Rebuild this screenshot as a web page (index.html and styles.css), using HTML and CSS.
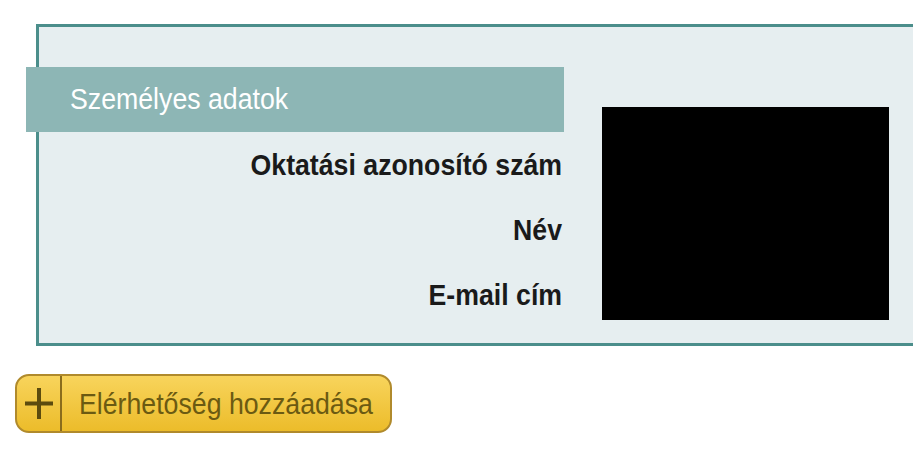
FILE: index.html
```html
<!DOCTYPE html>
<html>
<head>
    <title>Személyes adatok</title>
    <link rel="stylesheet" href="styles.css">
</head>
<body>
    <div class="page">
        <div class="panel">
            <div class="labels">
                <div class="section-title"><span class="narrow">Személyes adatok</span></div>
                <div class="field-label"><span class="narrow">Oktatási azonosító szám</span></div>
                <div class="field-label"><span class="narrow">Név</span></div>
                <div class="field-label"><span class="narrow">E-mail cím</span></div>
            </div>
            <div class="values"></div>
        </div>

        <button class="add-btn">
            <span class="add-icon">
                <svg width="28" height="31" viewBox="0 0 28 31">
                    <path d="M14 0 V31 M0 15.5 H28" stroke="#5c4b0e" stroke-width="4" fill="none"/>
                </svg>
            </span>
            <span class="add-text"><span class="narrow">Elérhetőség hozzáadása</span></span>
        </button>
    </div>
</body>
</html>
```

FILE: styles.css
```css
body {
    margin: 0;
    background-color: #ffffff;
    font-family: "Liberation Sans", Arial, sans-serif;
}
.page {
    padding: 24px 0 0 15px;
}
.narrow {
    display: inline-block;
    white-space: nowrap;
    transform: scaleX(0.89);
    transform-origin: left center;
}
.panel {
    display: flex;
    width: 874px;
    margin-left: 21px;
    padding: 40px 0 16px 0;
    background-color: #e6eef0;
    border: 3px solid #4b8e8b;
    border-right: none;
}
.labels {
    width: 538px;
    margin-left: -13px;
}
.section-title {
    height: 65px;
    line-height: 64px;
    padding-left: 44px;
    background-color: #8db6b5;
    color: #ffffff;
    font-size: 30px;
}
.field-label {
    height: 65px;
    line-height: 65px;
    padding-right: 2px;
    text-align: right;
    font-size: 30px;
    font-weight: bold;
    color: #1a1a1a;
}
.field-label .narrow {
    transform-origin: right center;
}
.values {
    width: 287px;
    height: 213px;
    margin: 0 0 0 38px;
    position: relative;
    top: 40px;
    background-color: #000000;
}
.add-btn {
    display: flex;
    align-items: stretch;
    margin-top: 28px;
    padding: 0;
    height: 59px;
    width: 377px;
    overflow: hidden;
    border: 2px solid #b08a2c;
    border-radius: 14px;
    background: linear-gradient(#f8d45c, #ecbc2a);
    cursor: pointer;
    font-family: inherit;
}
.add-icon {
    flex: none;
    display: flex;
    align-items: center;
    justify-content: center;
    width: 43px;
    border-right: 2px solid #8a6c1c;
}
.add-text {
    flex: none;
    display: flex;
    align-items: center;
    padding-left: 17px;
    font-size: 30px;
    color: #6b5a12;
}
```
